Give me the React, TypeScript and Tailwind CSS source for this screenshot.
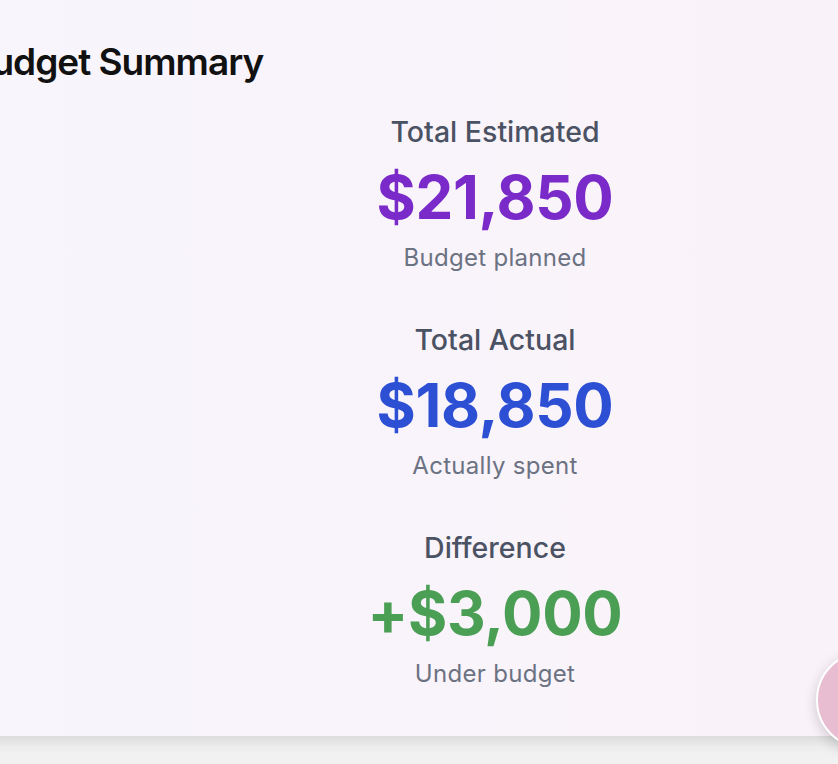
import React from 'react';

// Summary stat rows — label, big figure, caption
const STATS = [
  { label: 'Total Estimated', value: '$21,850', caption: 'Budget planned', color: 'text-[#7a2ac8]' },
  { label: 'Total Actual', value: '$18,850', caption: 'Actually spent', color: 'text-[#2c4fd4]' },
  { label: 'Difference', value: '+$3,000', caption: 'Under budget', color: 'text-[#4a9f55]' },
];

function Stat({ label, value, caption, color }: (typeof STATS)[number]) {
  return (
    <div className="flex flex-col items-center">
      <div className="text-[28.5px] leading-[34px] font-medium text-[#4b5263]">{label}</div>
      <div className={`mt-[16px] text-[60px] leading-[64px] font-bold tracking-[-0.3px] ${color}`}>{value}</div>
      <div className="mt-[15px] text-[24px] leading-[28px] text-[#6b7282] tracking-[0.3px]">{caption}</div>
    </div>
  );
}

export default function App() {
  return (
    <div
      className="relative w-[838px] h-[764px] overflow-hidden bg-[#f1f1f1]"
      style={{ fontFamily: 'Inter, "Noto Sans", sans-serif' }}
    >
      {/* ── Card ─────────────────────────────────────────────── */}
      <div className="ml-[-70px] w-[1000px] h-[736px] bg-gradient-to-r from-[#f8f5fc] to-[#faf2f9] shadow-[0_4px_14px_rgba(0,0,0,0.12)] pl-[38px] pt-[39px]">
        <h2 className="text-[37px] leading-[46px] font-semibold tracking-[-1px] text-[#111]">Budget Summary</h2>

        <div className="ml-[327px] w-[400px] mt-[30px] flex flex-col gap-[51px]">
          {STATS.map((s) => (
            <Stat key={s.label} {...s} />
          ))}
        </div>
      </div>

      {/* ── Floating bubble ─────────────────────────────────── */}
      <div className="absolute left-[816px] top-[651px] w-[98px] h-[98px] rounded-full bg-[#e9bdd1] border-2 border-white shadow-[0_4px_14px_rgba(0,0,0,0.18)]" />
    </div>
  );
}
